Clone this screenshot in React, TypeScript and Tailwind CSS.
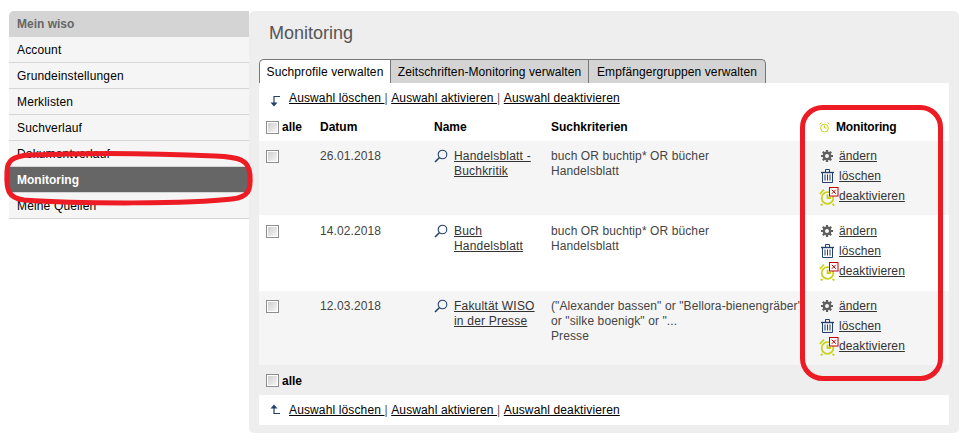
const menu = ["Account", "Grundeinstellungen", "Merklisten", "Suchverlauf", "Dokumentverlauf", "Monitoring", "Meine Quellen"];

const rows = [
  { date: "26.01.2018", name: ["Handelsblatt -", "Buchkritik"], criteria: ["buch OR buchtip* OR bücher", "Handelsblatt"], style: "bg-[#f5f5f5] h-[74px] pt-[8px]" },
  { date: "14.02.2018", name: ["Buch", "Handelsblatt"], criteria: ["buch OR buchtip* OR bücher", "Handelsblatt"], style: "bg-white h-[76px] pt-[9px]" },
  {
    date: "12.03.2018",
    name: ["Fakultät WISO", "in der Presse"],
    criteria: ['("Alexander bassen" or "Bellora-bienengräber"', 'or "silke boenigk" or "...', "Presse"],
    style: "bg-[#f5f5f5] h-[74px] pt-[8px]",
  },
];

function Checkbox() {
  return (
    <span className="block w-[13px] h-[13px] border border-[#8e8e8e] bg-white p-[1px] shrink-0">
      <span className="block w-full h-full bg-gradient-to-br from-[#cfcfcf] to-[#f6f6f6]" />
    </span>
  );
}

function ArrowDown() {
  return (
    <svg width="12" height="12" viewBox="0 0 12 12" className="shrink-0">
      <path d="M11 1.500H5V10" fill="none" stroke="#24406f" strokeWidth="1.200" />
      <path d="M1.500 7.500h7L5 11.500z" fill="#24406f" />
    </svg>
  );
}

function ArrowUp() {
  return (
    <svg width="12" height="12" viewBox="0 0 12 12" className="shrink-0">
      <path d="M11 9.500H5V2" fill="none" stroke="#24406f" strokeWidth="1.200" />
      <path d="M1.500 4.500h7L5 .5z" fill="#24406f" />
    </svg>
  );
}

function Search() {
  return (
    <svg width="14" height="14" viewBox="0 0 14 14" className="shrink-0">
      <circle cx="8.500" cy="5.500" r="4.300" fill="none" stroke="#24406f" strokeWidth="1.100" />
      <path d="M5.300 8.700L1 13" stroke="#24406f" strokeWidth="1.600" />
    </svg>
  );
}

function Gear() {
  return (
    <svg width="12" height="12" viewBox="0 0 12 12" className="shrink-0">
      <circle cx="6" cy="6" r="3.200" fill="none" stroke="#5f5f5f" strokeWidth="2.400" />
      <path d="M6 0v2.500M6 9.500V12M0 6h2.500M9.500 6H12M1.800 1.800l1.800 1.800M8.400 8.400l1.800 1.800M10.200 1.800L8.400 3.600M3.600 8.400l-1.800 1.800" stroke="#5f5f5f" strokeWidth="2.200" />
    </svg>
  );
}

function Trash() {
  return (
    <svg width="13" height="14" viewBox="0 0 13 14" className="shrink-0">
      <path d="M0 3.500h13" stroke="#24406f" strokeWidth="1.400" />
      <path d="M4.500 3V.5h4V3" fill="none" stroke="#24406f" />
      <path d="M1.500 3.500h10v10h-10z" fill="none" stroke="#24406f" />
      <path d="M4 5.500v6M6.500 5.500v6M9 5.500v6" stroke="#24406f" />
    </svg>
  );
}

function ClockOff() {
  return (
    <svg width="20" height="19" viewBox="0 0 20 19" className="shrink-0">
      <circle cx="8.500" cy="11" r="5.800" fill="none" stroke="#c8d21e" strokeWidth="1.800" />
      <path d="M8.500 7.500V11h3.500M.8 7l3.500-3.800.9-.2M3.500 17l-1.800 1.500M13.500 17l1.800 1.500" fill="none" stroke="#c8d21e" strokeWidth="1.800" />
      <rect x="10.500" y=".5" width="8.500" height="8.500" fill="#fff" stroke="#c00000" />
      <path d="M12.800 2.800l4 4M16.800 2.800l-4 4" stroke="#c00000" />
    </svg>
  );
}

function Clock() {
  return (
    <svg width="11" height="11" viewBox="0 0 11 11" className="shrink-0">
      <circle cx="5.500" cy="6" r="3.900" fill="none" stroke="#c8d21e" />
      <path d="M5.500 3.500V6h2M.5 2.500l2-2M8.500 .5l2 2" fill="none" stroke="#c8d21e" />
    </svg>
  );
}

function BulkLinks() {
  return (
    <div className="flex text-black tracking-[0.13px]">
      <a className="underline whitespace-pre">Auswahl löschen </a>
      <span className="whitespace-pre text-[#555]">| </span>
      <a className="underline whitespace-pre">Auswahl aktivieren </a>
      <span className="whitespace-pre text-[#555]">| </span>
      <a className="underline whitespace-pre">Auswahl deaktivieren</a>
    </div>
  );
}

function Actions() {
  return (
    <div className="flex flex-col leading-[20px] text-[#333]">
      <div className="flex items-center h-[20px]">
        <span className="w-[20px] flex justify-center pr-[4px]"><Gear /></span>
        <a className="underline">ändern</a>
      </div>
      <div className="flex items-center h-[20px]">
        <span className="w-[20px] flex justify-center pr-[4px]"><Trash /></span>
        <a className="underline">löschen</a>
      </div>
      <div className="flex items-center h-[20px]">
        <span className="w-[20px] flex"><ClockOff /></span>
        <a className="underline">deaktivieren</a>
      </div>
    </div>
  );
}

export default function App() {
  return (
    <div className="relative w-[971px] h-[446px] overflow-hidden bg-white font-['Liberation_Sans',Arial,sans-serif] text-[12px] text-[#444]">
      <div className="flex pl-[9px] pt-[11px]">
        {/* sidebar */}
        <div className="w-[240px] shrink-0">
          <div className="h-[26px] bg-[#d4d4d4] rounded-tl-[5px] pl-[8px] flex items-center font-bold text-[#666]">Mein wiso</div>
          {menu.map((m) => (
            <div
              key={m}
              className={
                m === "Monitoring"
                  ? "h-[26px] bg-[#666666] border-b border-[#d5d5d5] pl-[8px] flex items-center font-bold text-white"
                  : "h-[26px] bg-[#f5f5f5] border-b border-[#d5d5d5] pl-[8px] flex items-center text-black tracking-[0.15px]"
              }
            >
              {m}
            </div>
          ))}
        </div>

        {/* main panel */}
        <div className="w-[710px] h-[422px] bg-[#eeeeee] rounded-[5px] px-[10px]">
          <h1 className="h-[48px] pl-[10px] pt-[12px] text-[18px] leading-[21px] font-normal text-[#555]">Monitoring</h1>

          <div className="flex h-[24px] text-black tracking-[0.1px]">
            <div className="w-[131px] bg-white border-l border-t border-[#777] rounded-tl-[5px] flex items-center justify-center">Suchprofile verwalten</div>
            <div className="w-[198px] bg-[#d4d4d4] border-l border-t border-[#777] flex items-center justify-center">Zeitschriften-Monitoring verwalten</div>
            <div className="w-[178px] bg-[#d4d4d4] border-x border-t border-[#777] rounded-tr-[5px] flex items-center justify-center">Empfängergruppen verwalten</div>
          </div>

          <div className="bg-white">
            <div className="h-[30px] flex items-center pl-[10px] gap-[8px]">
              <span className="mt-[5px]"><ArrowDown /></span>
              <BulkLinks />
            </div>
            <div className="h-[28px] grid grid-cols-[61px_114px_117px_268px_1fr] items-center font-bold text-black">
              <div className="flex items-center pl-[7px] gap-[3px]">
                <Checkbox />
                <span>alle</span>
              </div>
              <div>Datum</div>
              <div>Name</div>
              <div>Suchkriterien</div>
              <div className="flex items-center gap-[6px] tracking-[-0.15px]">
                <Clock />
                <span>Monitoring</span>
              </div>
            </div>

            {rows.map((r) => (
              <div key={r.date} className={`${r.style} grid grid-cols-[61px_114px_117px_268px_1fr] leading-[15px] tracking-[0.1px]`}>
                <div className="pl-[7px] pt-[1px]"><Checkbox /></div>
                <div>{r.date}</div>
                <div className="flex gap-[6px]">
                  <Search />
                  <div className="text-[#333] tracking-[0.2px]">
                    {r.name.map((n) => (
                      <a key={n} className="block underline w-fit">{n}</a>
                    ))}
                  </div>
                </div>
                <div className="whitespace-nowrap">
                  {r.criteria.map((c) => (
                    <div key={c}>{c}</div>
                  ))}
                </div>
                <div className="-mt-[3px]"><Actions /></div>
              </div>
            ))}
          </div>

          <div className="h-[29px] mt-[1px] flex items-center pl-[7px] gap-[3px] font-bold text-black">
            <Checkbox />
            <span>alle</span>
          </div>
          <div className="h-[30px] bg-white flex items-center pl-[10px] gap-[8px]">
            <ArrowUp />
            <BulkLinks />
          </div>
        </div>
      </div>

      {/* red annotations drawn over the screenshot */}
      <svg className="absolute inset-0 pointer-events-none" width="971" height="446" viewBox="0 0 971 446">
        <path
          d="M30 155C12 156 7 161 7 172C6 190 8 198 24 200C80 204 190 204 232 199C249 197 251 190 250 175C249 160 240 157 215 156C150 153 80 153 30 155Z"
          fill="none"
          stroke="#ed1c24"
          strokeWidth="5"
        />
        <rect x="802.500" y="107.500" width="138" height="271" rx="20" fill="none" stroke="#ed1c24" strokeWidth="5" />
      </svg>
    </div>
  );
}
